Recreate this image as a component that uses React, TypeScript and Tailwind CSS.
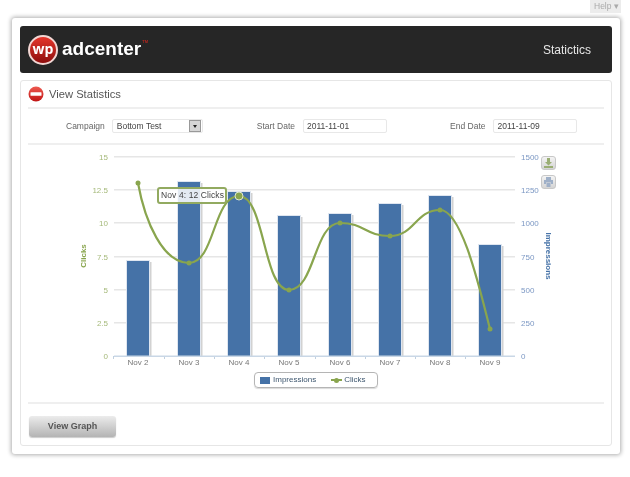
import React from "react";

const days = ["Nov 2", "Nov 3", "Nov 4", "Nov 5", "Nov 6", "Nov 7", "Nov 8", "Nov 9"];
const centers = [138, 189, 239, 289, 340, 390, 440, 490];
const barTops = [261, 182, 192, 216, 214, 204, 196, 245];
const clicks = [183, 263, 196, 290, 223, 236, 210, 329];
const gridY = [157, 190, 223, 257, 290, 323, 356];
const leftLabels = ["15", "12.5", "10", "7.5", "5", "2.5", "0"];
const rightLabels = ["1500", "1250", "1000", "750", "500", "250", "0"];

// flat tangents at every turning point, traced ends on the first and last segment
const clicksLine =
  "M 138 183 C 145 222 163 263 189 263 C 215 263 213 196 239 196 C 265 196 263 290 289 290 C 315 290 314 223 340 223 C 365 223 365 236 390 236 C 415 236 415 210 440 210 C 462 210 480 290 490 329";

const Chart = () => (
  <svg viewBox="21 145 590 227" className="block w-[590px] h-[227px]" style={{ fontFamily: "'Liberation Sans', sans-serif" }}>
    {gridY.map((y, i) => (
      <g key={y}>
        {i < 6 && <rect x="114" y={y - 1} width="401" height="1.5" fill="#e6e6e6" />}
        <text x="108" y={y + 3} textAnchor="end" fontSize="8" fill="#a5b97a">
          {leftLabels[i]}
        </text>
        <text x="521" y={y + 3} fontSize="8" fill="#7c98c4">
          {rightLabels[i]}
        </text>
      </g>
    ))}
    <text transform="translate(86 256) rotate(-90)" textAnchor="middle" fontSize="8" fontWeight="bold" fill="#89a54e">
      Clicks
    </text>
    <text transform="translate(546 256) rotate(90)" textAnchor="middle" fontSize="8" fontWeight="bold" fill="#4572a7">
      Impressions
    </text>
    {centers.map((x, i) => (
      <g key={x}>
        <rect x={x - 10} y={barTops[i] + 1} width="23.5" height={355 - barTops[i]} fill="#d2d2d2" />
        <rect x={x - 12} y={barTops[i] - 1} width="24" height={357 - barTops[i]} fill="#dfe6f0" />
        <rect x={x - 11} y={barTops[i]} width="22" height={356 - barTops[i]} fill="#4572a7" />
        <text x={x} y="365" textAnchor="middle" fontSize="8" fill="#777">
          {days[i]}
        </text>
        <rect x={x - 25} y="356" width="1" height="3" fill="#c0d0e0" />
      </g>
    ))}
    <rect x="114" y="355.5" width="401" height="1.5" fill="#c9d7e6" />
    <path d={clicksLine} fill="none" stroke="#89a54e" strokeWidth="2.2" />
    {centers.map((x, i) =>
      i === 2 ? (
        <circle key={x} cx={x} cy={clicks[i]} r="4" fill="#89a54e" stroke="#dfe8cf" strokeWidth="1" />
      ) : (
        <circle key={x} cx={x} cy={clicks[i]} r="2.5" fill="#89a54e" />
      )
    )}
  </svg>
);

const ExportButton = ({ children }: { children: React.ReactNode }) => (
  <div className="w-[15px] h-[14px] rounded-[3px] border border-[#c8c8c8] bg-gradient-to-b from-[#f4f4f4] to-[#d4d4d4] flex items-center justify-center">
    {children}
  </div>
);

const Field = ({ label, value, className }: { label: string; value: string; className: string }) => (
  <div className={`flex items-center ${className}`}>
    <span className="text-[#666]">{label}</span>
    <div className="ml-[8px] w-[84px] h-[14px] border border-[#e8e8e8] rounded-[2px] pl-[3px] leading-[12px] text-[#444]">{value}</div>
  </div>
);

export default function App() {
  return (
    <div
      className="w-[630px] h-[477px] bg-white overflow-hidden blur-[0.5px]"
      style={{ fontFamily: "'Liberation Sans', Arial, sans-serif" }}
    >
      <div className="flex justify-end pr-[9px]">
        <div className="w-[31px] h-[13px] bg-[#ececec] text-[8.5px] leading-[13px] text-[#aaa] pl-[4px]">Help ▾</div>
      </div>

      <div className="ml-[12px] mt-[5px] w-[608px] h-[436px] bg-white rounded-[3px] p-[8px] shadow-[0_0_4px_1px_rgba(0,0,0,0.32)]">
        {/* top banner */}
        <div className="h-[47px] bg-[#262626] rounded-[3px] flex items-center pl-[8px] pr-[21px]">
          <div className="w-[30px] h-[30px] rounded-full bg-gradient-to-b from-[#e5352b] to-[#8f0d0d] border-2 border-[#f2d6d3] flex items-center justify-center text-white font-bold text-[14px] leading-none pb-[2px]" style={{ fontFamily: "'Open Sans', sans-serif" }}>
            wp
          </div>
          <span className="ml-[4px] text-white font-bold text-[19px] leading-none pb-[2px]">adcenter</span>
          <span className="text-[#b3261e] text-[4px] font-bold self-start mt-[13px] ml-[1px]">TM</span>
          <span className="ml-auto text-[12px] text-[#e6e6e6]">Statictics</span>
        </div>

        {/* main panel */}
        <div className="mt-[7px] h-[366px] border border-[#e6e6e6] rounded-[3px] text-[8.5px]">
          <div className="mx-[7px] h-[28px] border-b-2 border-[#efefef] flex items-center">
            <svg width="16" height="16" viewBox="0 0 16 16" className="shrink-0">
              <defs>
                <linearGradient id="minus" x1="0" y1="0" x2="0" y2="1">
                  <stop offset="0" stopColor="#ee5a50" />
                  <stop offset="1" stopColor="#c01414" />
                </linearGradient>
              </defs>
              <circle cx="8" cy="8" r="7.5" fill="url(#minus)" />
              <rect x="2.5" y="6.2" width="11" height="3.6" rx="0.6" fill="#fff" />
            </svg>
            <span className="ml-[5px] text-[11.2px] text-[#555]">View Statistics</span>
          </div>

          <div className="mx-[7px] h-[36px] border-b-2 border-[#efefef] flex items-center">
            <div className="ml-[38px] flex items-center">
              <span className="text-[#666]">Campaign</span>
              <div className="ml-[7px] w-[91px] h-[14px] border border-[#e8e8e8] rounded-[2px] pl-[4px] pr-px flex items-center justify-between text-[#444]">
                <span>Bottom Test</span>
                <span className="w-[12px] h-[12px] bg-[#d6d6d6] border border-[#999] flex items-center justify-center">
                  <span className="w-0 h-0 border-x-[2.5px] border-x-transparent border-t-[3px] border-t-[#222]" />
                </span>
              </div>
            </div>
            <Field label="Start Date" value="2011-11-01" className="ml-[54px]" />
            <Field label="End Date" value="2011-11-09" className="ml-[63px]" />
          </div>

          <div className="relative">
            <Chart />
            {/* tooltip and export buttons sit over the plot */}
            <div className="absolute left-[136px] top-[42px] h-[17px] w-[70px] border-2 border-[#92aa60] rounded-[3px] bg-white/85 text-[#444] text-[8.5px] leading-[13px] pl-[2px] tracking-[0.1px]">
              Nov 4: 12 Clicks
            </div>
            <div className="absolute left-[520px] top-[11px] flex flex-col gap-[5px]">
              <ExportButton>
                <svg width="11" height="10" viewBox="0 0 11 10">
                  <path d="M4 0h3v4h2L5.5 7.5 2 4h2zM1 8h9v2H1z" fill="#9aae74" />
                </svg>
              </ExportButton>
              <ExportButton>
                <svg width="11" height="10" viewBox="0 0 11 10">
                  <path d="M3 0h5v3H3zM1 3h9v4H8V5.5H3V7H1zM3.5 6h4v4h-4z" fill="#9fb0c8" />
                </svg>
              </ExportButton>
            </div>
          </div>

          <div className="flex justify-center">
            <div className="h-[16px] w-[124px] border border-[#b5b5b5] rounded-[4px] flex items-center pl-[5px] text-[8px] text-[#3e576f] shadow-[0_1px_1px_rgba(0,0,0,0.15)]">
              <span className="w-[10px] h-[7px] bg-[#4572a7]" />
              <span className="ml-[3px]">Impressions</span>
              <span className="ml-[15px] relative w-[11px] h-[2px] bg-[#89a54e]">
                <span className="absolute left-[3px] -top-[1.5px] w-[5px] h-[5px] rounded-full bg-[#89a54e]" />
              </span>
              <span className="ml-[2px]">Clicks</span>
            </div>
          </div>

          <div className="mx-[7px] mt-[14px] border-t-2 border-[#efefef] pt-[12px] pl-px">
            <button className="w-[87px] h-[21px] rounded-[3px] bg-gradient-to-b from-[#ececec] to-[#b4b4b4] text-[9px] font-bold text-[#555] shadow-[0_1px_1px_rgba(0,0,0,0.2)]">
              View Graph
            </button>
          </div>
        </div>
      </div>
    </div>
  );
}
